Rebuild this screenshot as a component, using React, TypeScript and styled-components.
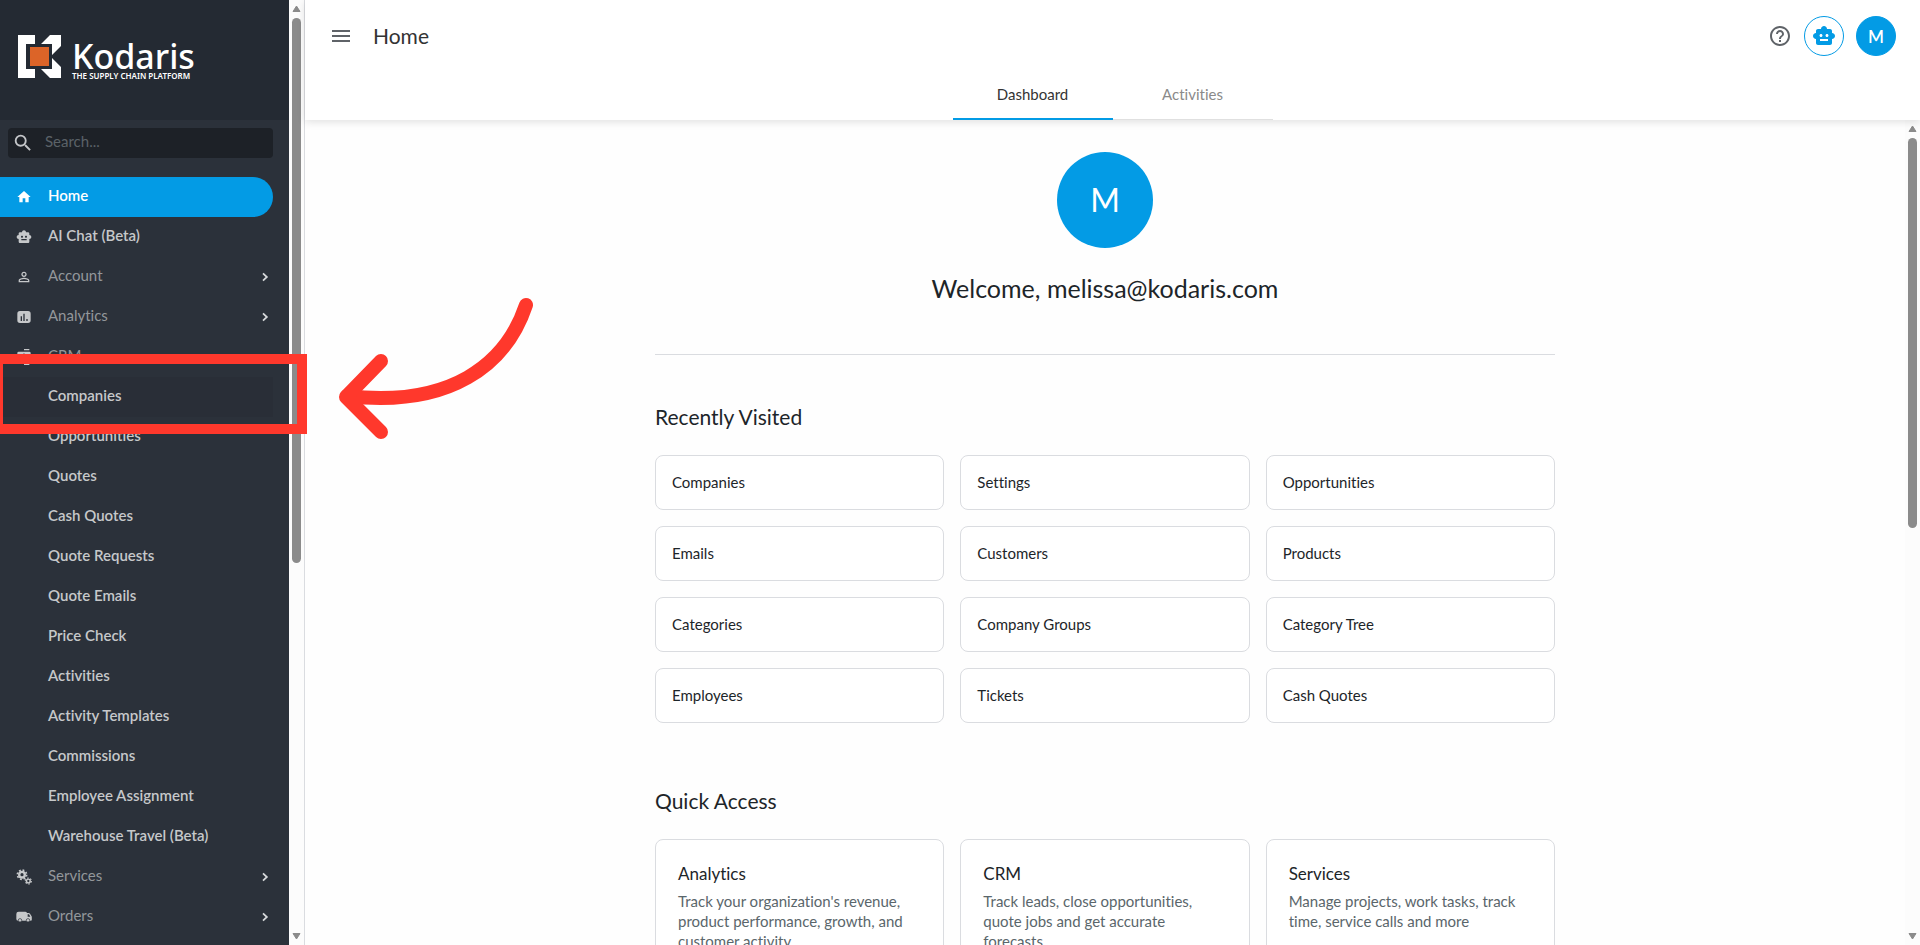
import React from "react";
import styled, { createGlobalStyle, css } from "styled-components";
import {
  MdHelpOutline,
  MdHome,
  MdMenu,
  MdPersonOutline,
  MdSearch,
  MdSmartToy,
} from "react-icons/md";

const colors = {
  accent: "#039be5",
  sidebar: "#2b313a",
  brand: "#242a33",
  ink: "#1d2529",
  muted: "#5a666b",
  line: "#dadce0",
  callout: "#ff382c",
};

const GlobalStyle = createGlobalStyle`
  *, *::before, *::after { box-sizing: border-box; }
  body {
    margin: 0;
    overflow: hidden;
    background: #fefefe;
    color: ${colors.ink};
    font-family: Lato, "Open Sans", sans-serif;
    font-size: 15px;
    font-variant-ligatures: none;
  }
  button, input { font: inherit; font-variant-ligatures: none; }
  button { border: 0; padding: 0; background: none; cursor: pointer; }
  a { color: inherit; text-decoration: none; }
  h1, h2, h3, p { margin: 0; font-weight: 400; }
`;

/* ---------- shell ---------- */

const Shell = styled.div`
  display: flex;
  height: 100vh;
  overflow: hidden;
`;

const SidebarFrame = styled.aside`
  display: flex;
  flex: none;
  border-right: 1px solid ${colors.line};
`;

const SidebarPanel = styled.div`
  display: flex;
  flex-direction: column;
  width: 289px;
  background: ${colors.sidebar};
  overflow: hidden;
`;

const Main = styled.main`
  display: flex;
  flex: 1;
  flex-direction: column;
  min-width: 0;
`;

/* ---------- scroll bar ---------- */

const Track = styled.div`
  display: flex;
  flex: none;
  flex-direction: column;
  align-items: center;
  width: 15px;
  background: #fcfcfc;
`;

const TrackEnd = styled.div`
  display: flex;
  flex: none;
  align-items: center;
  justify-content: center;
  height: 18px;
`;

const Thumb = styled.div<{ $share: number }>`
  flex: ${(p) => p.$share} 0 0;
  width: 9px;
  border-radius: 5px;
  background: #8b8b8b;
`;

const TrackRest = styled.div<{ $share: number }>`
  flex: ${(p) => p.$share} 0 0;
`;

function ScrollBar({ share }: { share: number }) {
  return (
    <Track aria-hidden="true">
      <TrackEnd>
        <svg width="9" height="8" viewBox="0 0 9 8">
          <path d="M4.5 1 8 6.5H1z" fill="#8b8b8b" stroke="#8b8b8b" strokeLinejoin="round" />
        </svg>
      </TrackEnd>
      <Thumb $share={share} />
      <TrackRest $share={1000 - share} />
      <TrackEnd>
        <svg width="9" height="8" viewBox="0 0 9 8">
          <path d="M4.5 7 8 1.5H1z" fill="#8b8b8b" stroke="#8b8b8b" strokeLinejoin="round" />
        </svg>
      </TrackEnd>
    </Track>
  );
}

/* ---------- brand ---------- */

const Brand = styled.a`
  display: flex;
  flex: none;
  align-items: flex-start;
  gap: 11px;
  height: 120px;
  padding: 35px 18px 0;
  background: ${colors.brand};
  color: #fff;
  font-family: "Noto Sans", sans-serif;
`;

const BrandText = styled.span`
  display: flex;
  flex-direction: column;
  padding-top: 5px;
  white-space: nowrap;
`;

const BrandName = styled.span`
  font-size: 34px;
  font-weight: 500;
  line-height: 32px;
`;

const BrandTagline = styled.span`
  font-size: 8px;
  font-weight: 600;
  line-height: 8px;
`;

function BrandMark() {
  return (
    <svg width="43" height="43" viewBox="0 0 43 43" aria-hidden="true">
      <path
        fill="#fff"
        d="M0 0h17v9H8v25h9v9H0zM32 0h11v11L34 20V9H23zM34 23l9 9v11H32L23 34h11z"
      />
      <path fill="#dc6428" d="M12 12h19v19H12z" />
    </svg>
  );
}

/* ---------- sidebar search ---------- */

const SearchBox = styled.label`
  display: flex;
  flex: none;
  align-items: center;
  gap: 11px;
  height: 30px;
  margin: 8px 16px 19px 8px;
  padding: 0 4px;
  border-radius: 4px;
  background: #1d2127;
  color: #c4c6c9;

  svg { flex: none; }
`;

const SearchInput = styled.input`
  width: 100%;
  min-width: 0;
  padding: 0 0 4px;
  border: 0;
  outline: 0;
  background: none;
  color: #d5d7d9;

  &::placeholder { color: #5b6267; opacity: 1; }
`;

/* ---------- sidebar navigation ---------- */

const Nav = styled.nav`
  flex: 1;
  min-height: 0;
  overflow: hidden;
`;

type Kind = "active" | "page" | "group";

const NavItem = styled.a<{ $kind: Kind; $hover?: boolean }>`
  display: flex;
  align-items: center;
  height: 40px;
  margin-right: 16px;
  padding-left: 16px;
  color: #c6c8ca;
  font-weight: 600;

  ${(p) => p.$hover && css`background: #292e37;`}
  ${(p) => p.$kind === "group" && css`
    color: #93979b;
    font-weight: 400;
  `}
  ${(p) => p.$kind === "active" && css`
    border-radius: 0 20px 20px 0;
    background: ${colors.accent};
    color: #fff;
  `}
`;

const NavIcon = styled.span<{ $light?: boolean }>`
  display: flex;
  flex: none;
  width: 32px;
  color: ${(p) => (p.$light ? "#fff" : "#c6c8ca")};
`;

const NavLabel = styled.span`
  flex: 1;
  line-height: 20px;
  padding-bottom: 4px;
  white-space: nowrap;
`;

const glyph = {
  width: 16,
  height: 16,
  viewBox: "0 0 24 24",
  "aria-hidden": true,
} as const;

function ChartIcon() {
  return (
    <svg {...glyph} fill="currentColor">
      <path
        fillRule="evenodd"
        d="M6 3h12a4 4 0 0 1 4 4v10a4 4 0 0 1-4 4H6a4 4 0 0 1-4-4V7a4 4 0 0 1 4-4zm1 8v7h2v-7zm4-4v11h2V7zm4.500 8v3h2v-3z"
      />
    </svg>
  );
}

function ContactsIcon() {
  return (
    <svg {...glyph} fill="currentColor">
      <path
        fillRule="evenodd"
        d="M12 0h8v2h-8zM12 22h8v2h-8zM20 4H4a2 2 0 0 0-2 2v12c0 1.100.9 2 2 2h16a2 2 0 0 0 2-2V6a2 2 0 0 0-2-2zm-8 2.800a2.300 2.300 0 1 1 0 4.600 2.300 2.300 0 0 1 0-4.600zM17 17H7v-1.500c0-1.700 3.300-2.500 5-2.500s5 .8 5 2.500z"
      />
    </svg>
  );
}

function GearsIcon() {
  return (
    <svg {...glyph} fill="none" stroke="currentColor">
      <circle cx="9" cy="8.500" r="4.200" strokeWidth="3.600" />
      <circle cx="9" cy="8.500" r="7" strokeWidth="2.400" strokeDasharray="2.750 2.750" />
      <circle cx="18.500" cy="18" r="2.800" strokeWidth="2.200" />
      <circle cx="18.500" cy="18" r="4.500" strokeWidth="1.800" strokeDasharray="2.360 2.360" />
    </svg>
  );
}

function VanIcon() {
  return (
    <svg {...glyph} fill="currentColor">
      <path
        fillRule="evenodd"
        d="M4 4h9.500a3 3 0 0 1 3 2H19c.9 0 1.500.3 2 1l2.200 3.500c.3.500.5 1 .5 1.500v4a1.500 1.500 0 0 1-1.500 1.500H3A2.500 2.500 0 0 1 .5 15V7.500A3.500 3.500 0 0 1 4 4zm13.500 4v3.500h4L19.500 8z"
      />
      <circle cx="6" cy="17" r="2.600" stroke={colors.sidebar} />
      <circle cx="18" cy="17" r="2.600" stroke={colors.sidebar} />
    </svg>
  );
}

function ChevronIcon() {
  return (
    <svg {...glyph} fill="none" stroke="#d8dadc" strokeWidth="2.600">
      <path d="m9 6.500 5.800 5.500L9 17.500" />
    </svg>
  );
}

interface Entry {
  label: string;
  kind: Kind;
  icon?: React.ReactNode;
  arrow?: boolean;
  hover?: boolean;
}

const page = (label: string): Entry => ({ label, kind: "page" });

const entries: Entry[] = [
  { label: "Home", kind: "active", icon: <MdHome size={16} /> },
  { label: "AI Chat (Beta)", kind: "page", icon: <MdSmartToy size={16} /> },
  { label: "Account", kind: "group", icon: <MdPersonOutline size={16} />, arrow: true },
  { label: "Analytics", kind: "group", icon: <ChartIcon />, arrow: true },
  { label: "CRM", kind: "group", icon: <ContactsIcon /> },
  { label: "Companies", kind: "page", hover: true },
  page("Opportunities"),
  page("Quotes"),
  page("Cash Quotes"),
  page("Quote Requests"),
  page("Quote Emails"),
  page("Price Check"),
  page("Activities"),
  page("Activity Templates"),
  page("Commissions"),
  page("Employee Assignment"),
  page("Warehouse Travel (Beta)"),
  { label: "Services", kind: "group", icon: <GearsIcon />, arrow: true },
  { label: "Orders", kind: "group", icon: <VanIcon />, arrow: true },
];

function Sidebar() {
  return (
    <SidebarFrame>
      <SidebarPanel>
        <Brand href="#">
          <BrandMark />
          <BrandText>
            <BrandName>Kodaris</BrandName>
            <BrandTagline>THE SUPPLY CHAIN PLATFORM</BrandTagline>
          </BrandText>
        </Brand>
        <SearchBox>
          <MdSearch size={22} />
          <SearchInput type="search" placeholder="Search..." aria-label="Search" />
        </SearchBox>
        <Nav>
          {entries.map((e) => (
            <NavItem key={e.label} href="#" $kind={e.kind} $hover={e.hover}>
              <NavIcon $light={e.kind === "active"}>{e.icon}</NavIcon>
              <NavLabel>{e.label}</NavLabel>
              {e.arrow && <ChevronIcon />}
            </NavItem>
          ))}
        </Nav>
      </SidebarPanel>
      <ScrollBar share={600} />
    </SidebarFrame>
  );
}

/* ---------- header ---------- */

const Header = styled.header`
  position: relative;
  flex: none;
  height: 120px;
  background: #fff;
  box-shadow: 0 2px 8px rgba(0, 0, 0, 0.12);
`;

const Toolbar = styled.div`
  display: flex;
  align-items: center;
  height: 72px;
  padding: 0 24px;
`;

const IconButton = styled.button`
  display: flex;
  color: #5f6368;
`;

const PageTitle = styled.h1`
  flex: 1;
  padding: 0 20px;
  color: #333;
  font-size: 21px;
  line-height: 24px;
`;

const Actions = styled.div`
  display: flex;
  align-items: center;
  gap: 12px;
`;

const RoundButton = styled.button<{ $filled?: boolean }>`
  display: flex;
  align-items: center;
  justify-content: center;
  width: 40px;
  height: 40px;
  border: 1px solid ${colors.accent};
  border-radius: 50%;
  background: ${(p) => (p.$filled ? colors.accent : "#fff")};
  color: ${(p) => (p.$filled ? "#fff" : colors.accent)};
  font-size: 17px;
  font-weight: 600;
`;

const Tabs = styled.div`
  display: flex;
  justify-content: center;
`;

const Tab = styled.button<{ $selected?: boolean }>`
  width: 160px;
  height: 48px;
  padding-bottom: ${(p) => (p.$selected ? "2px" : "3px")};
  border-bottom: ${(p) => (p.$selected ? `2px solid ${colors.accent}` : "1px solid #e0e0e0")};
  color: ${(p) => (p.$selected ? "#333" : "#8a8a8a")};
`;

/* ---------- dashboard ---------- */

const Body = styled.div`
  display: flex;
  flex: 1;
  min-height: 0;
`;

const Scroller = styled.div`
  flex: 1;
  min-width: 0;
  overflow: hidden;
  padding: 32px 24px 0;
`;

const Content = styled.div`
  max-width: 900px;
  margin: 0 auto;
`;

const Hero = styled.section`
  display: flex;
  flex-direction: column;
  align-items: center;
  gap: 24px;
  padding-bottom: 50px;
  border-bottom: 1px solid ${colors.line};
`;

const Avatar = styled.div`
  display: flex;
  align-items: center;
  justify-content: center;
  width: 96px;
  height: 96px;
  border-radius: 50%;
  background: ${colors.accent};
  color: #fff;
  font-size: 32px;
  line-height: 40px;
`;

const Welcome = styled.h2`
  font-size: 25px;
  line-height: 32px;
`;

const Section = styled.section`
  padding-top: 48px;
`;

const SectionTitle = styled.h2`
  margin-bottom: 24px;
  font-size: 21px;
  line-height: 28px;
`;

const Grid = styled.div`
  display: grid;
  grid-template-columns: repeat(3, 1fr);
  gap: 16px;
  padding-bottom: 16px;
`;

const Card = styled.a`
  padding: 16px;
  border: 1px solid ${colors.line};
  border-radius: 8px;
  background: #fff;
  line-height: 21px;
`;

const AccessCard = styled(Card)`
  padding: 22px;
`;

const AccessTitle = styled.h3`
  padding-bottom: 5px;
  font-size: 17px;
  line-height: 24px;
`;

const AccessText = styled.p`
  color: ${colors.muted};
  line-height: 20px;
`;

const visited = [
  "Companies", "Settings", "Opportunities",
  "Emails", "Customers", "Products",
  "Categories", "Company Groups", "Category Tree",
  "Employees", "Tickets", "Cash Quotes",
];

const access = [
  ["Analytics", "Track your organization's revenue, product performance, growth, and customer activity"],
  ["CRM", "Track leads, close opportunities, quote jobs and get accurate forecasts"],
  ["Services", "Manage projects, work tasks, track time, service calls and more"],
];

/* ---------- annotation over the page ---------- */

const Highlight = styled.div`
  position: absolute;
  top: 354px;
  left: -7px;
  width: 314px;
  height: 80px;
  border: 10px solid ${colors.callout};
  pointer-events: none;
`;

const Arrow = styled.svg`
  position: absolute;
  top: 290px;
  left: 330px;
  pointer-events: none;
`;

export default function App() {
  return (
    <>
      <GlobalStyle />
      <Shell>
        <Sidebar />
        <Main>
          <Header>
            <Toolbar>
              <IconButton aria-label="Menu"><MdMenu size={24} /></IconButton>
              <PageTitle>Home</PageTitle>
              <Actions>
                <IconButton aria-label="Help"><MdHelpOutline size={24} /></IconButton>
                <RoundButton aria-label="AI chat"><MdSmartToy size={24} /></RoundButton>
                <RoundButton $filled>M</RoundButton>
              </Actions>
            </Toolbar>
            <Tabs role="tablist">
              <Tab role="tab" aria-selected="true" $selected>Dashboard</Tab>
              <Tab role="tab" aria-selected="false">Activities</Tab>
            </Tabs>
          </Header>
          <Body>
            <Scroller>
              <Content>
                <Hero>
                  <Avatar>M</Avatar>
                  <Welcome>Welcome, melissa@kodaris.com</Welcome>
                </Hero>
                <Section>
                  <SectionTitle>Recently Visited</SectionTitle>
                  <Grid>
                    {visited.map((v) => <Card key={v} href="#">{v}</Card>)}
                  </Grid>
                </Section>
                <Section>
                  <SectionTitle>Quick Access</SectionTitle>
                  <Grid>
                    {access.map(([title, text]) => (
                      <AccessCard key={title} href="#">
                        <AccessTitle>{title}</AccessTitle>
                        <AccessText>{text}</AccessText>
                      </AccessCard>
                    ))}
                  </Grid>
                </Section>
              </Content>
            </Scroller>
            <ScrollBar share={494} />
          </Body>
        </Main>
      </Shell>
      <Highlight />
      <Arrow width="210" height="156" viewBox="330 290 210 156" fill="none" stroke={colors.callout} strokeWidth="14" strokeLinecap="round" strokeLinejoin="round" aria-hidden="true">
        <path d="M526 305C506 365 450 408 347 396" />
        <path d="M381 361 346 397 381 432" />
      </Arrow>
    </>
  );
}
